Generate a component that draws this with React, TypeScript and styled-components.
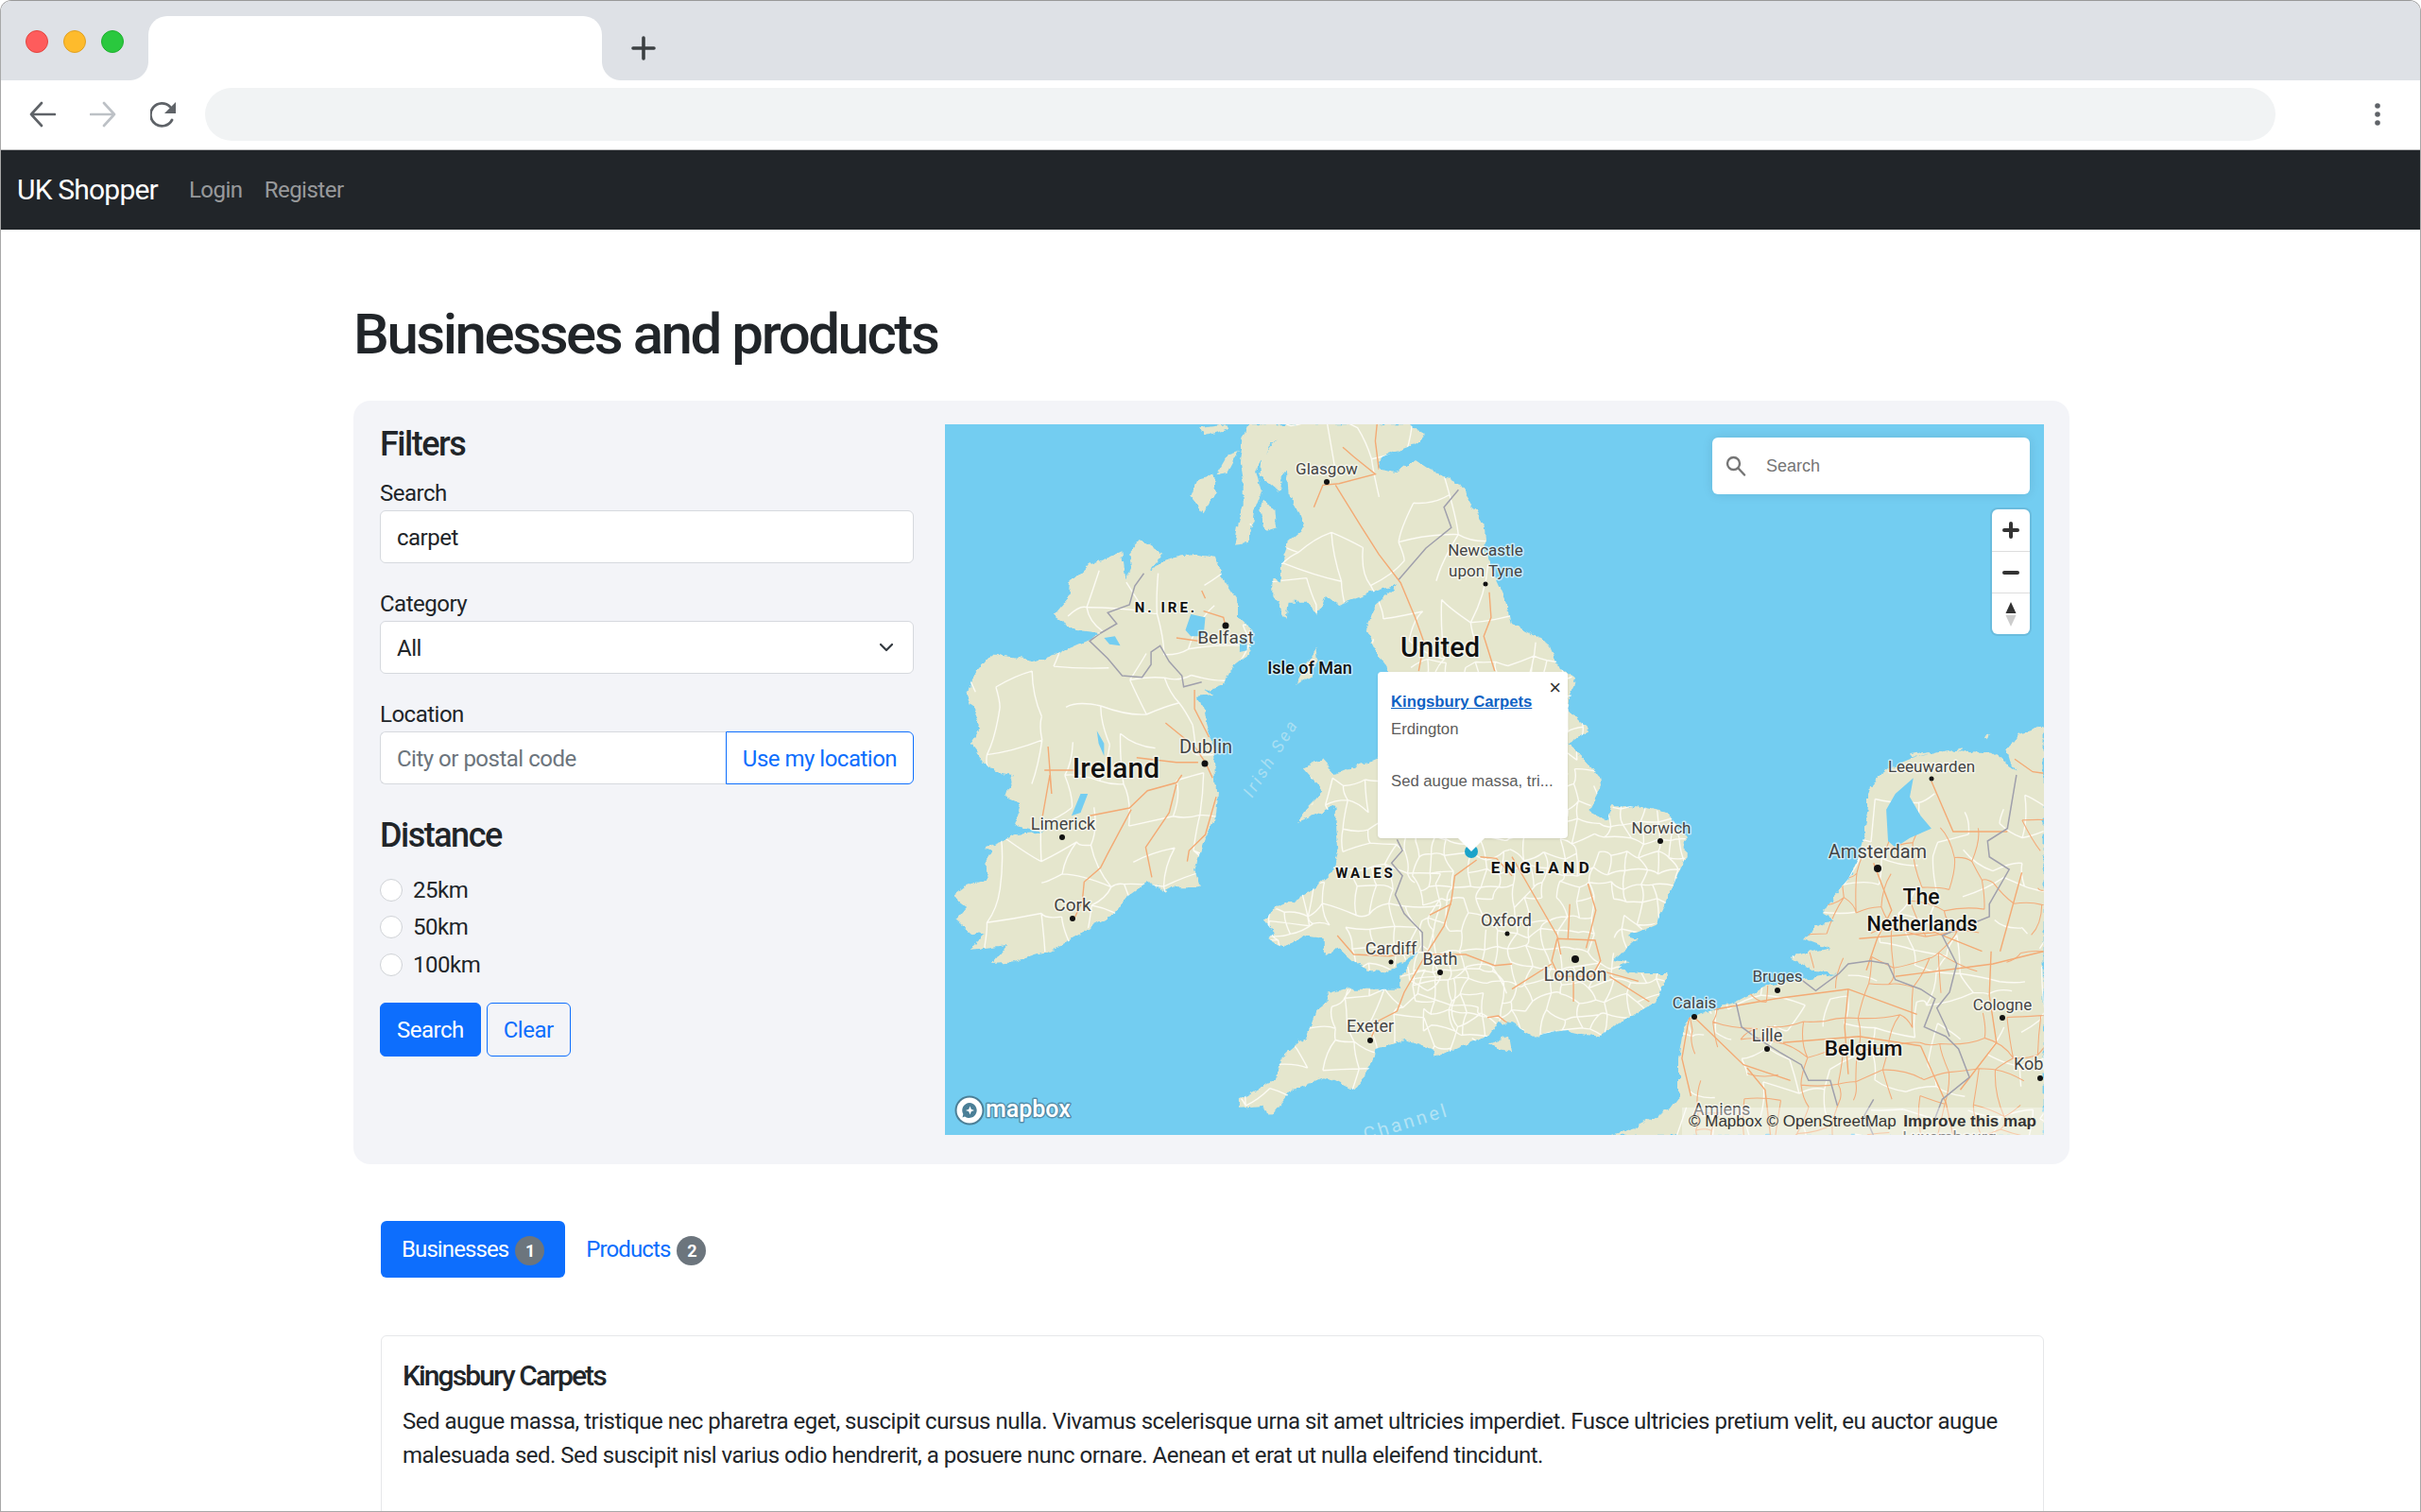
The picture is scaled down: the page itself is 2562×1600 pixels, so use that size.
import React from 'react';
import styled, { createGlobalStyle } from 'styled-components';
import { ChevronDown } from 'lucide-react';

const GlobalStyle = createGlobalStyle`
  html, body {
    margin: 0;
    padding: 0;
    background: #fff;
    overflow: hidden;
  }
  * { box-sizing: border-box; }
`;

const uiFont = `Roboto, 'Liberation Sans', sans-serif`;
const mapFont = `Roboto, 'Liberation Sans', sans-serif`;
const helvetica = `'Liberation Sans', Arial, sans-serif`;

const Frame = styled.div`
  width: 2562px;
  height: 1600px;
  overflow: hidden;
  background: #fff;
  border: 1px solid #a8a8a8;
  border-top-color: #999;
  border-radius: 12px 12px 0 0;
  font-family: ${uiFont};
  color: #212529;
  font-size: 24px;
  line-height: 36px;
  letter-spacing: -0.5px;
`;

const TabStrip = styled.div`
  height: 84px;
  background: #dee1e6;
  display: flex;
  align-items: flex-end;
  padding-left: 156px;
  position: relative;
`;

const Dots = styled.div`
  position: absolute;
  left: 26px;
  top: 31px;
  display: flex;
  gap: 16px;
`;

const Dot = styled.span<{ $color: string; $edge: string }>`
  width: 24px;
  height: 24px;
  border-radius: 50%;
  background: ${p => p.$color};
  border: 1px solid ${p => p.$edge};
`;

const BrowserTab = styled.div`
  width: 480px;
  height: 68px;
  background: #fff;
  border-radius: 20px 20px 0 0;
  position: relative;

  &::before, &::after {
    content: "";
    position: absolute;
    bottom: 0;
    width: 20px;
    height: 20px;
  }
  &::before {
    left: -20px;
    background: radial-gradient(circle at 0 0, #dee1e6 19.5px, #fff 20.5px);
  }
  &::after {
    right: -20px;
    background: radial-gradient(circle at 100% 0, #dee1e6 19.5px, #fff 20.5px);
  }
`;

const NewTab = styled.svg`
  width: 26px;
  height: 26px;
  margin: 0 0 21px 31px;
`;

const Toolbar = styled.div`
  height: 74px;
  background: #fff;
  border-bottom: 1.5px solid #b8b8b8;
  display: flex;
  align-items: center;
  padding: 0 30px 2px 30px;
`;

const NavIcon = styled.svg`
  width: 28px;
  height: 28px;
  margin-right: 36px;
  flex: none;
`;

const AddressBar = styled.div`
  width: 2191px;
  height: 56px;
  border-radius: 28px;
  background: #f1f3f4;
  margin-left: -6px;
`;

const Kebab = styled.svg`
  width: 8px;
  height: 26px;
  margin-left: 104px;
`;

const Navbar = styled.nav`
  height: 84px;
  background: #212529;
  display: flex;
  align-items: center;
  padding-left: 17px;
`;

const Brand = styled.a`
  font-size: 30px;
  color: #fff;
  margin-right: 33px;
  letter-spacing: -0.8px;
`;

const NavLink = styled.a`
  color: rgba(255, 255, 255, 0.55);
  margin-right: 23px;
`;

const Main = styled.main`
  width: 1816px;
  margin-left: 373px;
  padding-top: 75px;
`;

const PageTitle = styled.h1`
  margin: 0 0 34px;
  font-size: 60px;
  line-height: 72px;
  font-weight: 500;
  letter-spacing: -2.45px;
`;

const Panel = styled.section`
  display: grid;
  grid-template-columns: 565px 1163px;
  gap: 33px;
  padding: 25px 27px 31px 28px;
  background: #f3f4f8;
  border-radius: 18px;
`;

const Filters = styled.form`
  display: flex;
  flex-direction: column;
`;

const SideHeading = styled.h4`
  margin: 0 0 12px;
  font-size: 36px;
  line-height: 43px;
  font-weight: 500;
  letter-spacing: -1.5px;
`;

const DistanceHeading = styled(SideHeading)`
  margin: 8px 0 16px;
`;

const Field = styled.div`
  margin-bottom: 25px;
`;

const Label = styled.label`
  display: block;
`;

const TextInput = styled.input`
  width: 100%;
  height: 56px;
  padding: 2px 17px 0;
  border: 1.5px solid #d6d9de;
  border-radius: 6px;
  background: #fff;
  font: inherit;
  letter-spacing: inherit;
  color: #212529;
  outline: none;

  &::placeholder { color: #6c757d; opacity: 1; }
`;

const SelectWrap = styled.div`
  position: relative;
`;

const Select = styled.select`
  width: 100%;
  height: 56px;
  padding: 2px 17px 0;
  appearance: none;
  border: 1.5px solid #d6d9de;
  border-radius: 6px;
  background: #fff;
  font: inherit;
  letter-spacing: inherit;
  color: #212529;
`;

const SelectChevron = styled(ChevronDown)`
  position: absolute;
  right: 17px;
  top: 16px;
  width: 24px;
  height: 24px;
  color: #343a40;
  pointer-events: none;
`;

const InputGroup = styled.div`
  display: flex;

  ${TextInput} {
    flex: 1;
    min-width: 0;
    border-radius: 6px 0 0 6px;
    border-right: none;
  }
`;

const Button = styled.button<{ $outline?: boolean }>`
  height: 57px;
  padding: 2px 17px 0;
  border: 1.5px solid #0d6efd;
  border-radius: 6px;
  background: ${p => (p.$outline ? 'transparent' : '#0d6efd')};
  color: ${p => (p.$outline ? '#0d6efd' : '#fff')};
  font: inherit;
  letter-spacing: inherit;
`;

const LocationButton = styled(Button)`
  width: 199px;
  height: 56px;
  padding: 2px 0 0;
  flex: none;
  border-radius: 0 6px 6px 0;
  background: #fff;
`;

const RadioRow = styled.label`
  height: 39.5px;
  display: flex;
  align-items: center;
  gap: 11px;
`;

const Radio = styled.input`
  appearance: none;
  width: 24px;
  height: 24px;
  margin: 0;
  border: 1.5px solid #cfd2d6;
  border-radius: 50%;
  background: #fff;
`;

const ButtonRow = styled.div`
  display: flex;
  gap: 6px;
  margin-top: 20px;
`;

const MapFrame = styled.div`
  position: relative;
  height: 752px;
  overflow: hidden;
  background: #73cdf1;
  letter-spacing: 0;
`;

const MapDrawing = styled.svg`
  display: block;
  width: 1163px;
  height: 752px;
`;

const MapLabel = styled.text<{ $halo?: string }>`
  font-family: ${mapFont};
  paint-order: stroke;
  stroke: ${p => p.$halo || 'rgba(255, 255, 255, 0.6)'};
  stroke-width: 3px;
  stroke-linejoin: round;
`;

const MapControls = styled.div`
  position: absolute;
  top: 14px;
  right: 15px;
  display: flex;
  flex-direction: column;
  align-items: flex-end;
  gap: 16px;
`;

const GeoSearch = styled.div`
  width: 336px;
  height: 60px;
  display: flex;
  align-items: center;
  gap: 21px;
  padding-left: 14px;
  background: #fff;
  border-radius: 6px;
  box-shadow: 0 0 12px rgba(0, 0, 0, 0.1);
  font-family: ${helvetica};
  font-size: 18px;
  color: #757575;
`;

const ZoomStack = styled.div`
  width: 40px;
  display: flex;
  flex-direction: column;
  background: #fff;
  border-radius: 6px;
  box-shadow: 0 0 0 2px rgba(0, 0, 0, 0.08);
`;

const ZoomButton = styled.div`
  height: 44px;
  display: flex;
  align-items: center;
  justify-content: center;

  & + & { border-top: 1px solid #ddd; }
`;

const Popup = styled.div`
  position: absolute;
  left: 458px;
  top: 262px;
  width: 201px;
  height: 176px;
  padding: 17px 14px 0;
  background: #fff;
  border-radius: 4px;
  box-shadow: 0 1px 3px rgba(0, 0, 0, 0.1);
  font-family: ${helvetica};
  font-size: 16.7px;
  line-height: 29px;
  color: #5c5c5c;

  &::after {
    content: "";
    position: absolute;
    left: 84px;
    bottom: -14px;
    border-left: 15px solid transparent;
    border-right: 15px solid transparent;
    border-top: 15px solid #fff;
  }
`;

const PopupClose = styled.span`
  position: absolute;
  right: 7px;
  top: 0;
  font-size: 22px;
  line-height: 34px;
  color: #333;
`;

const PopupLink = styled.a`
  display: block;
  font-weight: 700;
  color: #0f62c4;
  text-decoration: underline;
`;

const PopupLine = styled.div`
  margin-bottom: 26px;
  white-space: nowrap;
`;

const Attribution = styled.div`
  position: absolute;
  right: 0;
  bottom: 0;
  width: 383px;
  height: 29px;
  padding: 0 8px 0 7px;
  display: flex;
  justify-content: space-between;
  align-items: center;
  background: rgba(255, 255, 255, 0.35);
  font-family: ${helvetica};
  font-size: 17px;
  line-height: 29px;
  color: #333;
  white-space: nowrap;
`;

const AttributionLink = styled.b`
  font-weight: 700;
`;

const Tabs = styled.div`
  display: flex;
  margin: 60px 0 61px 29px;
`;

const Tab = styled.a<{ $active?: boolean }>`
  height: 60px;
  display: flex;
  align-items: center;
  gap: 7px;
  padding: 0 22px;
  border-radius: 6px;
  background: ${p => (p.$active ? '#0d6efd' : 'transparent')};
  color: ${p => (p.$active ? '#fff' : '#0d6efd')};
  letter-spacing: -0.9px;
`;

const Badge = styled.span`
  width: 31px;
  height: 31px;
  margin-top: 3px;
  display: flex;
  align-items: center;
  justify-content: center;
  border-radius: 50%;
  background: #6c757d;
  color: #fff;
  font-size: 18px;
  font-weight: 700;
`;

const Card = styled.article`
  width: 1760px;
  height: 400px;
  margin-left: 29px;
  padding: 24px 22px;
  border: 1.5px solid #e6e7e9;
  border-radius: 6px;
`;

const CardTitle = styled.h5`
  margin: 0 0 12px;
  font-size: 30px;
  line-height: 36px;
  font-weight: 500;
  letter-spacing: -1.9px;
`;

const CardText = styled.p`
  margin: 0;
`;

/* map data: coordinates read off four crops of the map, flat x,y lists */
type Pts = number[];
const tile = (ox: number, oy: number) => (pts: Pts): string[] => {
  const out: string[] = [];
  for (let i = 0; i < pts.length; i += 2) {
    out.push(`${(ox + pts[i] * 0.3827).toFixed(1)},${(oy + pts[i + 1] / 3).toFixed(1)}`);
  }
  return out;
};
const nw = tile(1000, 440);
const ne = tile(1600, 440);
const sw = tile(1000, 820);
const se = tile(1600, 820);

const poly = (...parts: string[][]) => 'M' + parts.flat().join('L') + 'Z';
const line = (...parts: string[][]) => 'M' + parts.flat().join('L');

const ireland = poly(
  nw([300, 635, 340, 580, 345, 530, 385, 490, 400, 470, 430, 460, 490, 430, 500, 520, 515, 480, 510, 430, 540, 390, 605, 435, 565, 490, 600, 465, 650, 445, 700, 440, 750, 450, 770, 520, 810, 590, 810, 640, 850, 680, 845, 750, 800, 790, 770, 850, 720, 870, 740, 885, 700, 890, 720, 960, 735, 1020, 745, 1100, 750, 1200]),
  sw([755, 60, 750, 130, 720, 200, 690, 300, 705, 355, 640, 355, 610, 372, 560, 340, 500, 390, 470, 440, 390, 490, 370, 510, 310, 550, 240, 575, 190, 595, 130, 600, 170, 540, 70, 555, 110, 510, 70, 500, 30, 460, 60, 420, 20, 385, 60, 350, 120, 330, 110, 280, 130, 240, 110, 230, 200, 190, 270, 180, 190, 160, 210, 90, 170, 70, 190, 0]),
  nw([130, 1130, 70, 1040, 100, 990, 60, 880, 80, 820, 125, 760, 200, 770, 245, 780, 320, 750, 400, 710, 430, 690, 360, 680])
);

const britain = poly(
  nw([840, 25, 825, 70, 815, 150, 825, 220, 825, 280, 810, 350, 800, 410, 840, 405, 855, 300, 875, 240, 860, 180, 900, 90, 920, 70, 880, 130, 870, 190, 920, 240, 945, 170, 950, 250, 985, 320, 995, 355, 950, 400, 930, 470, 930, 530, 905, 520, 905, 570, 945, 645, 950, 590, 1000, 590, 1030, 630, 1050, 570, 1085, 600, 1170, 565, 1250, 535, 1190, 600, 1165, 680, 1195, 750, 1225, 810, 1250, 1000, 1190, 1090, 1080, 1140, 1040, 1090, 990, 1120, 1050, 1200]),
  sw([1050, 50, 1000, 110, 975, 150, 1080, 100, 1090, 230, 1070, 310, 1020, 360, 960, 400, 920, 420, 880, 460, 910, 500, 895, 520, 935, 550, 990, 510, 1050, 520, 1050, 570, 1090, 550, 1130, 590, 1170, 620, 1220, 625, 1270, 590, 1310, 560, 1260, 640, 1260, 680, 1100, 680, 1060, 695, 1060, 720, 1025, 750, 1000, 830, 930, 900, 910, 970, 815, 1030, 815, 1055, 880, 1050, 900, 1085, 960, 1000, 1060, 960, 1130, 1000, 1180, 920, 1190, 870, 1270, 840, 1350, 870, 1355, 900, 1430, 860, 1500, 830, 1530, 780]),
  se([0, 790, 60, 830, 130, 810, 240, 830, 320, 770, 400, 720, 430, 630, 350, 630, 290, 620, 320, 590, 280, 585, 350, 520, 320, 510, 400, 470, 420, 420, 480, 260, 480, 200, 430, 120, 350, 100, 280, 100, 260, 145, 210, 115, 250, 30, 245, 0]),
  ne([250, 1160, 210, 1100, 155, 1040, 215, 1000, 155, 930, 175, 835, 130, 800, 100, 720, 0, 660]),
  nw([1550, 580, 1500, 450, 1490, 340, 1420, 220, 1340, 170, 1300, 140, 1250, 180, 1200, 170, 1210, 130, 1300, 90, 1330, 60, 1280, 25])
);

const continent = poly(
  ne([1470, 985, 1400, 1010, 1370, 1060, 1380, 1100, 1400, 1130, 1330, 1070, 1200, 1060, 1100, 1090, 1040, 1120, 1010, 1145, 985, 1200]),
  se([985, 100, 975, 180, 960, 260, 930, 330, 880, 400, 860, 440, 890, 460, 840, 480, 810, 520, 880, 550, 770, 575, 830, 620, 900, 630, 800, 650, 700, 670, 620, 720, 560, 745, 490, 770, 470, 830, 460, 900, 460, 1000, 465, 1020, 440, 1060, 340, 1120, 270, 1145, 1470, 1145])
);

const islands = [
  poly(nw([680, 255, 700, 200, 740, 190, 750, 240, 715, 310])),
  poly(nw([750, 190, 785, 120, 812, 110, 780, 180])),
  poly(nw([700, 40, 780, 28, 785, 40, 720, 60])),
  poly(nw([870, 290, 885, 265, 910, 300, 915, 355, 885, 365])),
  poly(nw([970, 855, 1000, 790, 1030, 740, 1035, 770, 1010, 825])),
  poly(se([985, 80, 990, 40, 1010, 25, 1005, 70])),
  poly(ne([1100, 1075, 1160, 1065, 1160, 1072, 1110, 1085])),
  poly(ne([1215, 1060, 1245, 1050, 1245, 1058, 1220, 1066])),
  poly(ne([1305, 1020, 1325, 1015, 1315, 1030])),
  poly(sw([1505, 850, 1560, 830, 1568, 880, 1530, 870])),
];

const lakes = [
  poly(nw([665, 680, 680, 630, 720, 640, 715, 700, 680, 700])),
  poly(nw([440, 705, 470, 700, 485, 730, 455, 725])),
  poly(nw([420, 1000, 440, 1040, 440, 1080, 425, 1040])),
  poly(sw([375, 60, 395, 60, 375, 120, 350, 130])),
  poly(se([1035, 110, 1060, 60, 1110, 10, 1100, 70, 1130, 130, 1160, 170, 1100, 200, 1060, 230, 1040, 210])),
  poly(nw([815, 710, 835, 700, 835, 745, 815, 750])),
];

const motorways = [
  line(nw([1020, 290, 1045, 220, 1090, 215, 1190, 185, 1130, 130, 1100, 100])),
  line(nw([1195, 25, 1190, 80, 1200, 170])),
  line(nw([1080, 220, 1150, 350, 1200, 440, 1260, 530, 1300, 640, 1325, 720, 1310, 810])),
  line(nw([1505, 560, 1510, 640, 1490, 700, 1520, 810])),
  line(nw([610, 975, 690, 1050, 720, 1100, 740, 1150])),
  line(nw([690, 870, 690, 930, 730, 1020])),
  line(nw([530, 1085, 640, 1100, 700, 1100])),
  line(nw([285, 1050, 295, 1200]), sw([290, 0, 270, 130])),
  line(nw([275, 1125, 360, 1125])),
  line(nw([715, 620, 770, 640, 775, 665])),
  line(nw([640, 705, 700, 715])),
  line(nw([710, 555, 720, 580])),
  line(sw([400, 130, 510, 105, 560, 50, 640, 25, 655, 0])),
  line(sw([515, 110, 450, 250, 430, 295, 385, 340, 380, 400, 360, 450])),
  line(sw([640, 30, 620, 120, 555, 230, 572, 325])),
  line(sw([750, 70, 720, 190, 675, 240, 670, 275])),
  line(sw([1470, 270, 1410, 320, 1400, 400, 1380, 480, 1330, 570, 1270, 690, 1250, 750, 1200, 780, 1180, 830])),
  line(sw([1330, 570, 1440, 570, 1520, 605, 1568, 600])),
  line(sw([1340, 445, 1400, 410])),
  line(sw([1085, 510, 1130, 570, 1230, 575, 1300, 560])),
  line(sw([1500, 770, 1530, 765, 1568, 800])),
  line(sw([1480, 260, 1525, 265, 1568, 320])),
  line(se([0, 260, 50, 360, 125, 510, 135, 570])),
  line(se([160, 410, 155, 520])),
  line(se([210, 345, 232, 430, 205, 550])),
  line(se([125, 520, 230, 525, 245, 590, 220, 640, 130, 640, 110, 590, 125, 520])),
  line(se([270, 640, 380, 720])),
  line(se([0, 680, 110, 600])),
  line(se([170, 640, 170, 720])),
  line(se([240, 620, 350, 655])),
  line(se([490, 770, 470, 900, 495, 1020])),
  line(se([505, 770, 640, 920, 770, 970])),
  line(se([560, 745, 730, 710, 930, 680, 1120, 760])),
  line(se([930, 680, 920, 800, 930, 950])),
  line(se([750, 850, 960, 830, 1130, 860])),
  line(se([650, 930, 700, 1000, 715, 1145])),
  line(se([1000, 280, 1050, 430, 1010, 520, 980, 620])),
  line(se([1325, 560, 1320, 700, 1340, 850, 1240, 1000])),
  line(se([1060, 640, 1330, 600, 1470, 560])),
  line(se([960, 520, 1170, 500, 1300, 560])),
  line(se([1160, 20, 1220, 180, 1370, 180])),
  line(ne([1390, 1090, 1440, 1130, 1470, 1135])),
  line(se([1130, 860, 1200, 1040, 1220, 1145])),
  line(se([1410, 310, 1350, 560])),
];

const borders = [
  line(nw([550, 500, 525, 540, 510, 600, 450, 625, 475, 660, 430, 690, 400, 715, 450, 770, 490, 825, 545, 830, 570, 790, 570, 750, 595, 730, 620, 780, 655, 825, 660, 860, 710, 845])),
  line(nw([1420, 235, 1380, 290, 1400, 355, 1330, 420, 1255, 520])),
  line(sw([1250, 205, 1265, 240, 1235, 280, 1265, 320, 1245, 380, 1270, 440, 1320, 500, 1320, 560])),
  line(se([620, 725, 635, 800, 670, 830, 740, 880, 800, 920, 820, 970, 880, 970, 900, 1050])),
  line(se([800, 650, 840, 685, 905, 630, 930, 600, 990, 590, 1040, 600, 1060, 650, 1130, 680, 1170, 710, 1140, 800, 1200, 830, 1235, 870, 1265, 960, 1190, 1030, 1170, 1090])),
  line(se([1395, 0, 1370, 170, 1315, 210, 1320, 260, 1375, 300, 1320, 410, 1320, 450, 1190, 510, 1230, 600, 1210, 690, 1175, 740, 1200, 800, 1210, 830])),
  line(se([1000, 1030, 975, 1080, 1000, 1145])),
];

// thin road web, clipped to the land: jittered grid with edges dropped, each edge slightly bent
const roadWeb = (x0: number, y0: number, w: number, h: number, step: number, keep: number, seed: number) => {
  let s = seed;
  const rnd = () => {
    s = (s * 16807) % 2147483647;
    return s / 2147483647;
  };
  const cols = Math.ceil(w / step);
  const rows = Math.ceil(h / step);
  const grid: [number, number][][] = [];
  for (let r = 0; r <= rows; r++) {
    grid.push([]);
    for (let c = 0; c <= cols; c++) {
      grid[r].push([x0 + c * step + (rnd() - 0.5) * step * 0.8, y0 + r * step + (rnd() - 0.5) * step * 0.8]);
    }
  }
  const edge = (a: [number, number], b: [number, number]) => {
    const mx = (a[0] + b[0]) / 2 + (rnd() - 0.5) * step * 0.4;
    const my = (a[1] + b[1]) / 2 + (rnd() - 0.5) * step * 0.4;
    return `M${a[0].toFixed(1)},${a[1].toFixed(1)}Q${mx.toFixed(1)},${my.toFixed(1)} ${b[0].toFixed(1)},${b[1].toFixed(1)}`;
  };
  let d = '';
  for (let r = 0; r <= rows; r++) {
    for (let c = 0; c <= cols; c++) {
      if (c < cols && rnd() < keep) d += edge(grid[r][c], grid[r][c + 1]);
      if (r < rows && rnd() < keep) d += edge(grid[r][c], grid[r + 1][c]);
    }
  }
  return d;
};

const whiteRoads = [
  roadWeb(1020, 610, 330, 430, 36, 0.6, 11),
  roadWeb(1330, 449, 270, 260, 40, 0.6, 23),
  roadWeb(1340, 830, 160, 200, 22, 0.75, 37),
  roadWeb(1300, 1030, 280, 130, 26, 0.7, 41),
  roadWeb(1500, 700, 290, 380, 17, 0.8, 53),
  roadWeb(1780, 850, 383, 351, 30, 0.45, 61),
].join('');

const orangeWeb = roadWeb(1790, 870, 373, 331, 30, 0.55, 71);

type Place = { t: string; x: number; y: number; size: number; dark?: boolean; bold?: boolean; spaced?: number; anchor?: 'start' };

const places: Place[] = [
  { t: 'Glasgow', x: 1404, y: 502, size: 17 },
  { t: 'Newcastle', x: 1572, y: 588, size: 17 },
  { t: 'upon Tyne', x: 1572, y: 610, size: 17 },
  { t: 'N. IRE.', x: 1234, y: 648, size: 15, bold: true, dark: true, spaced: 3 },
  { t: 'Belfast', x: 1297, y: 681, size: 19 },
  { t: 'Isle of Man', x: 1386, y: 713, size: 18, dark: true },
  { t: 'United', x: 1524, y: 695, size: 29, dark: true },
  { t: 'Ireland', x: 1181, y: 823, size: 30, dark: true },
  { t: 'Dublin', x: 1276, y: 797, size: 20 },
  { t: 'Limerick', x: 1125, y: 878, size: 18 },
  { t: 'Cork', x: 1135, y: 964, size: 19 },
  { t: 'WALES', x: 1445, y: 929, size: 15, bold: true, dark: true, spaced: 3 },
  { t: 'ENGLAND', x: 1632, y: 924, size: 17, bold: true, dark: true, spaced: 4.5 },
  { t: 'Cardiff', x: 1472, y: 1010, size: 18 },
  { t: 'Bath', x: 1524, y: 1021, size: 18 },
  { t: 'Exeter', x: 1450, y: 1092, size: 18 },
  { t: 'Oxford', x: 1594, y: 980, size: 18 },
  { t: 'Norwich', x: 1758, y: 882, size: 17 },
  { t: 'Amsterdam', x: 1987, y: 908, size: 20 },
  { t: 'The', x: 2033, y: 957, size: 23, dark: true },
  { t: 'Netherlands', x: 2034, y: 985, size: 21.5, dark: true },
  { t: 'London', x: 1667, y: 1038, size: 20 },
  { t: 'Bruges', x: 1881, y: 1039, size: 17 },
  { t: 'Calais', x: 1793, y: 1067, size: 17 },
  { t: 'Lille', x: 1870, y: 1102, size: 18 },
  { t: 'Belgium', x: 1972, y: 1117, size: 22.5, dark: true },
  { t: 'Cologne', x: 2119, y: 1069, size: 17 },
  { t: 'Koblenz', x: 2131, y: 1132, size: 18, anchor: 'start' },
  { t: 'Amiens', x: 1822, y: 1180, size: 18 },
  { t: 'Luxembourg', x: 2063, y: 1210, size: 18 },
  { t: 'Leeuwarden', x: 2044, y: 817, size: 17 },
];

const towns: [number, number, number][] = [
  [1404, 510, 3], [1572, 618, 2.5], [1297, 662, 3.5], [1275, 808, 3.5], [1124, 886, 3],
  [1135, 972, 3], [1472, 1018, 2.5], [1524, 1029, 3], [1450, 1101, 3], [1595, 988, 2.5],
  [1757, 890, 3], [1987, 919, 4], [1667, 1015, 4], [1881, 1048, 3], [1793, 1076, 3],
  [1870, 1110, 3], [2119, 1077, 3], [2159, 1141, 3], [2044, 824, 2.5],
];

const MapArt = () => (
  <MapDrawing viewBox="1000 449 1163 752">
    <defs>
      <filter id="coast" x="-2%" y="-2%" width="104%" height="104%">
        <feTurbulence type="fractalNoise" baseFrequency="0.09" numOctaves="4" seed="4" />
        <feDisplacementMap in="SourceGraphic" scale="8" xChannelSelector="R" yChannelSelector="G" />
        <feGaussianBlur stdDeviation="0.5" />
      </filter>
      <filter id="soft">
        <feGaussianBlur stdDeviation="0.45" />
      </filter>
      <clipPath id="land">
        <path d={ireland} />
        <path d={britain} />
        <path d={continent} />
      </clipPath>
    </defs>
    <g filter="url(#coast)" fill="#e5e6cd">
      <path d={ireland} />
      <path d={britain} />
      <path d={continent} />
      {islands.map((d, i) => <path key={i} d={d} />)}
    </g>
    <g filter="url(#soft)" fill="none">
      <g clipPath="url(#land)">
        <path d={whiteRoads} stroke="#fcfbf4" strokeWidth="1.4" />
        <path d={orangeWeb} stroke="#f3ad7c" strokeWidth="1.1" />
        {motorways.map((d, i) => <path key={i} d={d} stroke="#f3aa74" strokeWidth="1.4" />)}
        {borders.map((d, i) => <path key={i} d={d} stroke="#a0a0ac" strokeWidth="1.5" />)}
      </g>
      {lakes.map((d, i) => <path key={i} d={d} fill="#73cdf1" />)}
    </g>
    <MapLabel x={1350} y={805} fontSize={18} fontStyle="italic" letterSpacing={3} textAnchor="middle" fill="#a9dff2" $halo="none" transform="rotate(-58 1350 805)">Irish Sea</MapLabel>
    <MapLabel x={1490} y={1194} fontSize={20} letterSpacing={3} textAnchor="middle" fill="#b4e3f4" $halo="none" transform="rotate(-17 1490 1194)">Channel</MapLabel>
    {towns.map(([x, y, r], i) => <circle key={i} cx={x} cy={y} r={r} fill="#111" />)}
    {places.map(p => (
      <MapLabel
        key={p.t}
        x={p.x}
        y={p.y}
        fontSize={p.size}
        fontWeight={p.bold ? 700 : p.dark ? 500 : 400}
        letterSpacing={p.spaced}
        textAnchor={p.anchor || 'middle'}
        fill={p.dark ? '#111' : '#444'}
      >
        {p.t}
      </MapLabel>
    ))}
    <circle cx={1557} cy={901} r={7} fill="#1ba3c9" />
    {/* mapbox logo */}
    <circle cx={1026} cy={1175} r={14.5} fill="#fff" stroke="#4b7f97" strokeWidth="2" />
    <path d="M1026 1167a8 8 0 1 1-5 14.5l-2.500 1 .8-3.500a8 8 0 0 1 6.700-12z" fill="#4b7f97" />
    <path d="M1026.500 1170.500l1.300 3.200 3.200 1.300-3.200 1.300-1.300 3.200-1.300-3.200-3.200-1.300 3.200-1.300z" fill="#fff" />
    <MapLabel x={1043} y={1182} fontSize={25} fontWeight={500} fill="#fff" $halo="rgba(60, 90, 110, 0.55)">mapbox</MapLabel>
  </MapDrawing>
);

const App: React.FC = () => (
  <Frame>
    <GlobalStyle />
    <TabStrip>
      <Dots>
        <Dot $color="#fe5c5c" $edge="#e2463f" />
        <Dot $color="#febb2c" $edge="#dfa023" />
        <Dot $color="#2ac83e" $edge="#1fb02f" />
      </Dots>
      <BrowserTab />
      <NewTab viewBox="0 0 26 26">
        <path d="M13 2v22M2 13h22" stroke="#3c4043" strokeWidth="3.6" strokeLinecap="round" />
      </NewTab>
    </TabStrip>
    <Toolbar>
      <NavIcon viewBox="0 0 28 28" fill="none" stroke="#5f6368" strokeWidth="2.600" strokeLinecap="round" strokeLinejoin="round">
        <path d="M27 14H2M13 2L2 14l11 12" />
      </NavIcon>
      <NavIcon viewBox="0 0 28 28" fill="none" stroke="#bdc1c6" strokeWidth="2.600" strokeLinecap="round" strokeLinejoin="round">
        <path d="M1 14h25M15 2l11 12-11 12" />
      </NavIcon>
      <NavIcon viewBox="0 0 28 28" fill="none">
        <path d="M23 20a12 12 0 1 1-2-14" stroke="#5f6368" strokeWidth="2.800" strokeLinecap="round" />
        <path d="M27 1v12H15z" fill="#5f6368" />
      </NavIcon>
      <AddressBar />
      <Kebab viewBox="0 0 8 26">
        <circle cx="4" cy="4" r="2.800" fill="#5f6368" />
        <circle cx="4" cy="13" r="2.800" fill="#5f6368" />
        <circle cx="4" cy="22" r="2.800" fill="#5f6368" />
      </Kebab>
    </Toolbar>
    <Navbar>
      <Brand>UK Shopper</Brand>
      <NavLink>Login</NavLink>
      <NavLink>Register</NavLink>
    </Navbar>
    <Main>
      <PageTitle>Businesses and products</PageTitle>
      <Panel>
        <Filters>
          <SideHeading>Filters</SideHeading>
          <Field>
            <Label>Search</Label>
            <TextInput defaultValue="carpet" />
          </Field>
          <Field>
            <Label>Category</Label>
            <SelectWrap>
              <Select defaultValue="All">
                <option>All</option>
              </Select>
              <SelectChevron strokeWidth={2.2} />
            </SelectWrap>
          </Field>
          <Field>
            <Label>Location</Label>
            <InputGroup>
              <TextInput placeholder="City or postal code" />
              <LocationButton type="button" $outline>Use my location</LocationButton>
            </InputGroup>
          </Field>
          <DistanceHeading>Distance</DistanceHeading>
          <RadioRow><Radio type="radio" name="distance" />25km</RadioRow>
          <RadioRow><Radio type="radio" name="distance" />50km</RadioRow>
          <RadioRow><Radio type="radio" name="distance" />100km</RadioRow>
          <ButtonRow>
            <Button type="button">Search</Button>
            <Button type="button" $outline>Clear</Button>
          </ButtonRow>
        </Filters>
        <MapFrame>
          <MapArt />
          <MapControls>
            <GeoSearch>
              <svg width="22" height="22" viewBox="0 0 22 22" fill="none" stroke="#757575" strokeWidth="2.400" strokeLinecap="round">
                <circle cx="8.500" cy="8.500" r="6.500" />
                <path d="M13.500 13.500L20 20.500" />
              </svg>
              Search
            </GeoSearch>
            <ZoomStack>
              <ZoomButton>
                <svg width="18" height="18" viewBox="0 0 18 18"><path d="M9 2v14M2 9h14" stroke="#333" strokeWidth="4" strokeLinecap="round" /></svg>
              </ZoomButton>
              <ZoomButton>
                <svg width="18" height="18" viewBox="0 0 18 18"><path d="M2 9h14" stroke="#333" strokeWidth="4" strokeLinecap="round" /></svg>
              </ZoomButton>
              <ZoomButton>
                <svg width="14" height="28" viewBox="0 0 14 28">
                  <path d="M7 1l5.500 12h-11z" fill="#333" />
                  <path d="M7 27l5.500-12h-11z" fill="#ccc" />
                </svg>
              </ZoomButton>
            </ZoomStack>
          </MapControls>
          <Popup>
            <PopupClose>×</PopupClose>
            <PopupLink>Kingsbury Carpets</PopupLink>
            <PopupLine>Erdington</PopupLine>
            <PopupLine>Sed augue massa, tri...</PopupLine>
          </Popup>
          <Attribution>
            <span>© Mapbox © OpenStreetMap</span>
            <AttributionLink>Improve this map</AttributionLink>
          </Attribution>
        </MapFrame>
      </Panel>
      <Tabs>
        <Tab $active>Businesses<Badge>1</Badge></Tab>
        <Tab>Products<Badge>2</Badge></Tab>
      </Tabs>
      <Card>
        <CardTitle>Kingsbury Carpets</CardTitle>
        <CardText>
          Sed augue massa, tristique nec pharetra eget, suscipit cursus nulla. Vivamus scelerisque urna sit amet ultricies imperdiet. Fusce ultricies pretium velit, eu auctor augue malesuada sed. Sed suscipit nisl varius odio hendrerit, a posuere nunc ornare. Aenean et erat ut nulla eleifend tincidunt.
        </CardText>
      </Card>
    </Main>
  </Frame>
);

export default App;
